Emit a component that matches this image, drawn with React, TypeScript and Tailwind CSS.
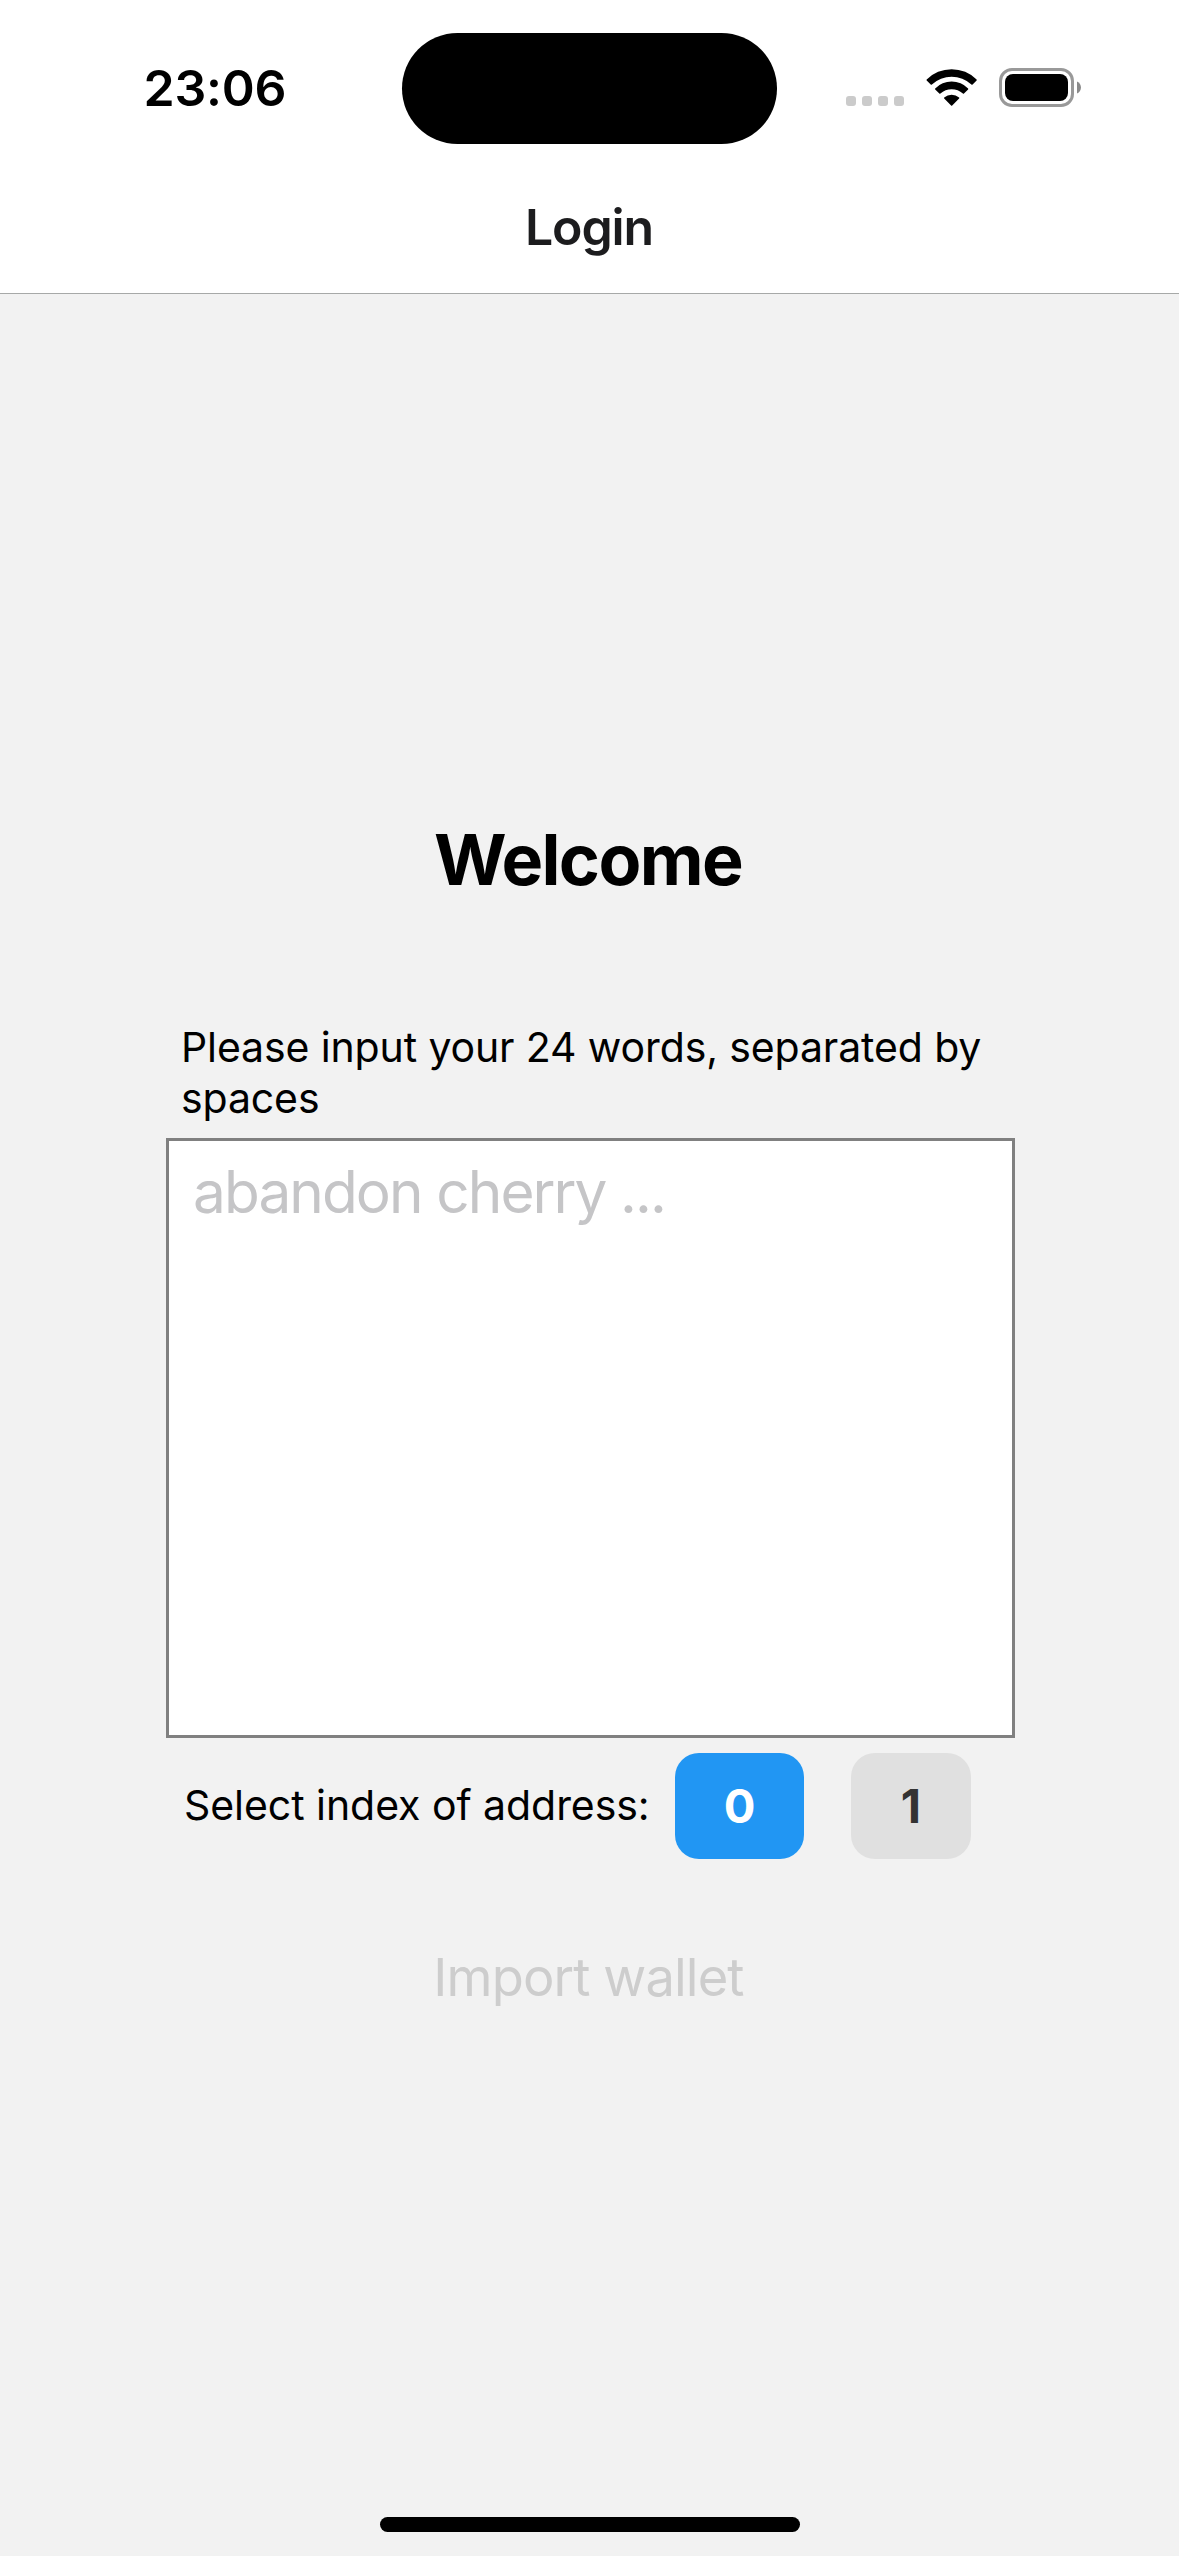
import { useState } from 'react';

function StatusIcons() {
  return (
    <svg width="236" height="39" viewBox="846 68 236 39" aria-hidden="true">
      <g fill="#cbcbcb">
        <rect x="846" y="96" width="10" height="10" rx="3" />
        <rect x="862" y="96" width="10" height="10" rx="3" />
        <rect x="878" y="96" width="10" height="10" rx="3" />
        <rect x="894" y="96" width="10" height="10" rx="3" />
      </g>
      <g fill="#000">
        <path d="M926.7 79.6 A35 35 0 0 1 976.6 79.6 Q977 80 976.6 80.5 L972.6 84.4 Q972 84.9 971.4 84.4 A29 29 0 0 0 931.9 84.4 Q931.3 84.9 930.7 84.4 L926.7 80.5 Q926.3 80 926.7 79.6Z" />
        <path d="M935.2 88.4 A23 23 0 0 1 968.1 88.4 Q968.5 88.9 968.1 89.4 L964 93.4 Q963.5 93.9 962.9 93.4 A17 17 0 0 0 940.4 93.4 Q939.8 93.9 939.3 93.4 L935.2 89.4 Q934.8 88.9 935.2 88.4Z" />
        <path d="M944.2 97.6 A11.5 11.5 0 0 1 959.1 97.6 Q959.6 98.1 959.1 98.6 L952.2 105.5 Q951.65 106 951.1 105.5 L944.2 98.6 Q943.7 98.1 944.2 97.6Z" />
      </g>
      <rect x="1000.5" y="69.5" width="72" height="36" rx="11.5" fill="none" stroke="#999" strokeWidth="3" />
      <rect x="1005" y="74" width="63" height="27" rx="8" fill="#000" />
      <path d="M1077 81.5 C1082.3 83.5 1082.3 91.5 1077 93.5Z" fill="#8a8a8a" />
    </svg>
  );
}

function StatusBar() {
  return (
    <div className="flex h-[160px] items-start">
      <div className="w-[402px] pt-[56px] pl-[143.5px] text-[50px] leading-[64px] font-semibold tracking-[-0.22px] text-black">
        23:06
      </div>
      <div className="mt-[33.4px] h-[110.8px] w-[375px] rounded-full bg-black" />
      <div className="pt-[68px] pl-[69px]">
        <StatusIcons />
      </div>
    </div>
  );
}

const indexes = [
  { label: '0', width: 'w-[129px]' },
  { label: '1', width: 'w-[120px]' },
];

export default function App() {
  const [selected, setSelected] = useState('0');
  const [words, setWords] = useState('');

  return (
    <div className="flex h-[2556px] w-[1179px] flex-col overflow-hidden bg-[#f2f2f2] font-['Inter','Liberation_Sans',sans-serif] text-black">
      <header className="h-[294px] border-b border-[#a7a9a8] bg-white">
        <StatusBar />
        <h1 className="flex h-[133px] items-center justify-center pt-px pr-px text-[50px] font-semibold tracking-[-1.09px] text-[#1c1c1e]">
          Login
        </h1>
      </header>

      <main className="flex flex-1 flex-col items-center pt-[524px]">
        <h2 className="pr-[3px] text-[70px] leading-[84px] font-bold tracking-[-1.63px]">Welcome</h2>

        <div className="mt-[120px] ml-0.5 w-[849px]">
          <label htmlFor="words" className="block pl-[15px] text-[41px] leading-[51px] tracking-[-0.12px]">
            Please input your 24 words, separated by
            <br />
            spaces
          </label>
          <textarea
            id="words"
            value={words}
            onChange={(e) => setWords(e.target.value)}
            placeholder="abandon cherry ..."
            className="mt-[14px] block h-[600px] w-full resize-none rounded-none border-3 border-[#808080] bg-white px-6 pt-[15px] text-[58.5px] leading-[72px] tracking-[-1.92px] outline-none placeholder:text-[#c5c5c7]"
          />
          <div className="mt-[15px] flex h-[106px] items-center">
            <span className="w-[509px] pb-0.5 pl-[18px] text-[41px] leading-[51px] tracking-[-0.05px]">
              Select index of address:
            </span>
            <div className="flex gap-[47px]">
              {indexes.map(({ label, width }) => (
                <button
                  key={label}
                  onClick={() => setSelected(label)}
                  className={`${width} h-[106px] rounded-3xl text-[47px] font-bold ${
                    selected === label ? 'bg-[#2196f3] text-white' : 'bg-[#e0e0e0] text-[#333333]'
                  }`}
                >
                  {label}
                </button>
              ))}
            </div>
          </div>
        </div>

        <button disabled className="mt-[86px] pr-0.5 text-[52.5px] leading-[64px] tracking-[-0.89px] text-[#cdcdcd]">
          Import wallet
        </button>
      </main>

      <div className="mb-6 h-[15px] w-[420px] self-center rounded-full bg-black" />
    </div>
  );
}
